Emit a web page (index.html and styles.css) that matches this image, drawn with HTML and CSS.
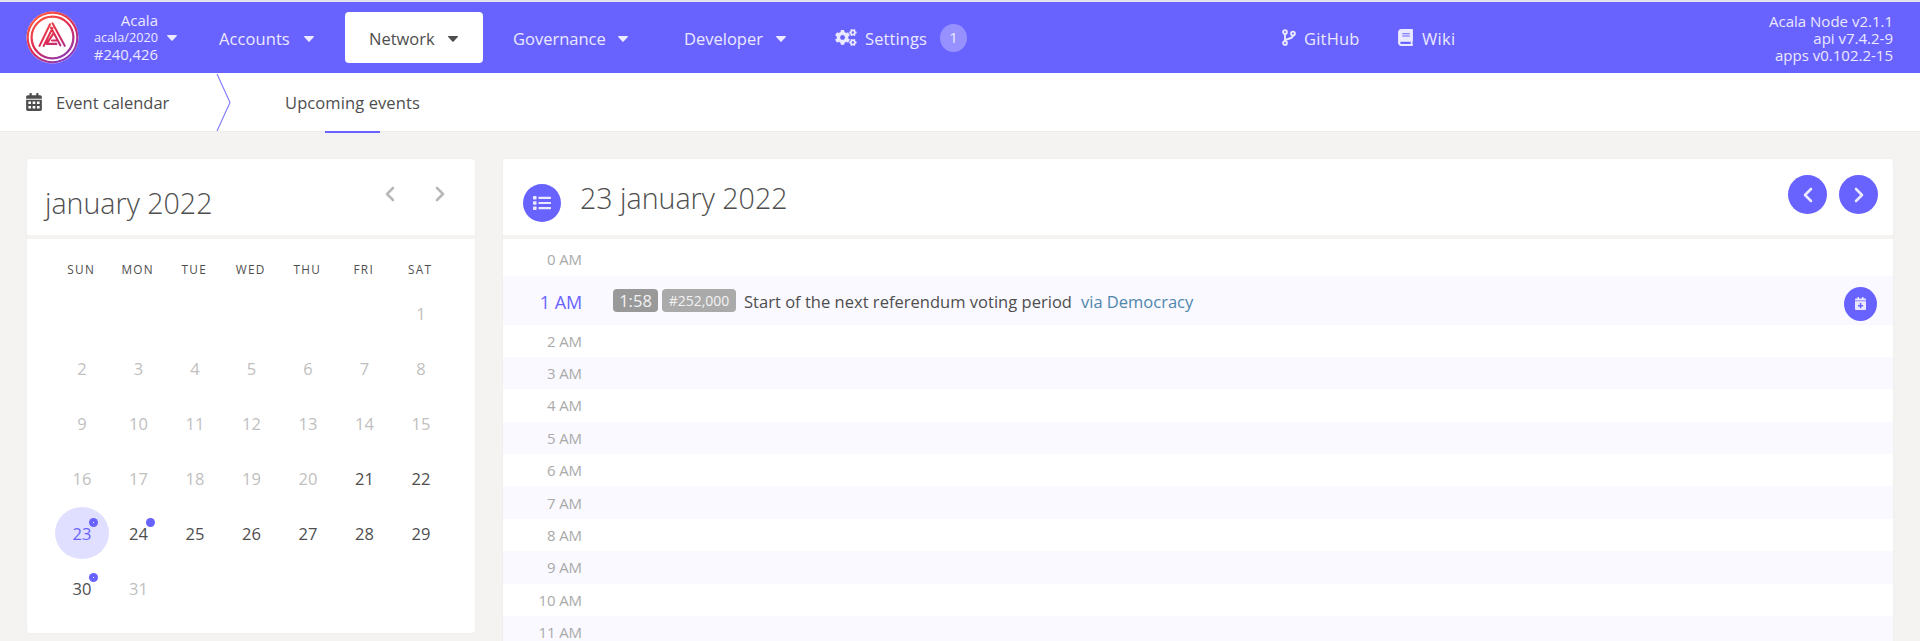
FILE: index.html
```html
<!DOCTYPE html>
<html lang="en">
<head>
<meta charset="utf-8">
<title>Event calendar</title>
<link rel="stylesheet" href="styles.css">
</head>
<body>
<svg class="defs" width="0" height="0">
  <symbol id="caret" viewBox="0 0 10 6"><path d="M.6 0h8.800c.5 0 .8.600.4 1L5.600 5.600a.8.8 0 0 1-1.200 0L.2 1C-.2.600.1 0 .6 0z" fill="currentColor"/></symbol>
  <symbol id="left" viewBox="0 0 10 16"><path d="M8 2L2 8l6 6" fill="none" stroke="currentColor" stroke-width="2.600" stroke-linecap="round" stroke-linejoin="round"/></symbol>
  <symbol id="right" viewBox="0 0 10 16"><path d="M2 2l6 6-6 6" fill="none" stroke="currentColor" stroke-width="2.600" stroke-linecap="round" stroke-linejoin="round"/></symbol>
</svg>
<header class="header">
  <svg class="logo" viewBox="0 0 54 54">
    <defs><linearGradient id="lg" gradientUnits="userSpaceOnUse" x1="8" y1="4" x2="42" y2="54"><stop offset="0" stop-color="#ff5a3c"/><stop offset=".5" stop-color="#dc2a55"/><stop offset="1" stop-color="#7a3cd0"/></linearGradient></defs>
    <circle cx="27" cy="27" r="26.500" fill="#fff"/>
    <circle cx="27" cy="27" r="25.300" fill="none" stroke="url(#lg)" stroke-width="2.200"/>
    <circle cx="27" cy="27" r="21.300" fill="none" stroke="url(#lg)" stroke-width="2.300"/>
    <path d="M27 12.500L39.500 35.500M24.500 13.500L13.800 35.500M27 17.500L18 35.500M25.500 17L35 35M27.500 23.500L21 33.500H31M26.500 30L31 30" fill="none" stroke="url(#lg)" stroke-width="2.100" stroke-linecap="round" stroke-linejoin="round"/>
  </svg>
  <div class="chain"><div class="l1">Acala</div><div class="l2">acala/2020</div><div class="l3">#240,426</div></div>
  <svg class="caret chain-caret"><use href="#caret"/></svg>
  <nav class="nav">
    <a class="item accounts"><span>Accounts</span><svg class="caret"><use href="#caret"/></svg></a>
    <a class="item network"><span>Network</span><svg class="caret"><use href="#caret"/></svg></a>
    <a class="item governance"><span>Governance</span><svg class="caret"><use href="#caret"/></svg></a>
    <a class="item developer"><span>Developer</span><svg class="caret"><use href="#caret"/></svg></a>
    <a class="item settings">
      <svg class="cogs" viewBox="0 0 640 512" fill="currentColor"><path d="M512.100 191l-8.200 14.300c-3 5.300-9.400 7.500-15.100 5.400-11.800-4.400-22.600-10.700-32.100-18.600-4.600-3.800-5.800-10.500-2.800-15.700l8.200-14.300c-6.900-8-12.300-17.300-15.900-27.400h-16.500c-6 0-11.200-4.300-12.200-10.300-2-12-2.100-24.600 0-37.100 1-6 6.200-10.400 12.200-10.400h16.500c3.600-10.100 9-19.400 15.900-27.400l-8.200-14.300c-3-5.200-1.900-11.900 2.800-15.700 9.500-7.900 20.400-14.200 32.100-18.600 5.700-2.100 12.100.1 15.100 5.400l8.200 14.300c10.500-1.900 21.200-1.900 31.700 0L552 6.300c3-5.300 9.400-7.500 15.100-5.400 11.800 4.400 22.600 10.700 32.100 18.600 4.600 3.800 5.800 10.500 2.800 15.700l-8.200 14.300c6.900 8 12.300 17.300 15.900 27.400h16.500c6 0 11.200 4.300 12.200 10.300 2 12 2.100 24.600 0 37.100-1 6-6.200 10.400-12.200 10.400h-16.500c-3.600 10.100-9 19.400-15.900 27.400l8.200 14.300c3 5.200 1.900 11.900-2.800 15.700-9.500 7.900-20.400 14.200-32.100 18.600-5.700 2.100-12.100-.1-15.100-5.400l-8.200-14.300c-10.400 1.900-21.200 1.900-31.700 0zm-10.500-58.800c38.500 29.600 82.400-14.300 52.800-52.800-38.500-29.700-82.400 14.300-52.800 52.800zM386.300 286.100l33.700 16.800c10.100 5.800 14.500 18.100 10.500 29.100-8.900 24.200-26.400 46.400-42.600 65.800-7.400 8.900-20.200 11.100-30.300 5.300l-29.100-16.800c-16 13.700-34.600 24.600-54.900 31.700v33.600c0 11.600-8.300 21.600-19.700 23.600-24.600 4.200-50.400 4.400-75.900 0-11.500-2-20-11.900-20-23.600V418c-20.300-7.200-38.900-18-54.900-31.700L74 403c-10 5.800-22.900 3.600-30.300-5.300-16.200-19.400-33.300-41.600-42.200-65.700-4-10.900.4-23.200 10.500-29.100l33.300-16.800c-3.900-20.900-3.900-42.400 0-63.400L12 205.800c-10.100-5.800-14.600-18.100-10.500-29 8.900-24.200 26-46.400 42.200-65.800 7.400-8.900 20.200-11.100 30.300-5.300l29.100 16.800c16-13.700 34.600-24.600 54.900-31.700V57.100c0-11.500 8.200-21.500 19.600-23.500 24.600-4.200 50.500-4.400 76-.1 11.500 2 20 11.900 20 23.600v33.600c20.300 7.200 38.900 18 54.900 31.700l29.100-16.800c10-5.800 22.900-3.600 30.300 5.300 16.200 19.400 33.200 41.600 42.100 65.800 4 10.900.1 23.200-10 29.100l-33.700 16.800c3.900 21 3.900 42.500 0 63.500zm-117.600 21.100c59.200-77-28.700-164.900-105.700-105.700-59.200 77 28.700 164.900 105.700 105.700zm243.400 182.700l-8.200 14.300c-3 5.300-9.400 7.500-15.100 5.400-11.800-4.400-22.600-10.700-32.100-18.600-4.600-3.800-5.800-10.500-2.800-15.700l8.200-14.300c-6.900-8-12.300-17.300-15.900-27.400h-16.500c-6 0-11.200-4.300-12.200-10.300-2-12-2.100-24.600 0-37.100 1-6 6.200-10.400 12.200-10.400h16.500c3.600-10.100 9-19.400 15.900-27.400l-8.200-14.300c-3-5.200-1.900-11.900 2.800-15.700 9.500-7.900 20.400-14.200 32.100-18.600 5.700-2.100 12.100.1 15.100 5.400l8.200 14.300c10.500-1.900 21.200-1.900 31.700 0l8.200-14.300c3-5.300 9.400-7.500 15.100-5.400 11.800 4.400 22.600 10.700 32.100 18.600 4.600 3.800 5.800 10.500 2.800 15.700l-8.200 14.300c6.900 8 12.300 17.300 15.900 27.400h16.500c6 0 11.200 4.300 12.200 10.300 2 12 2.100 24.600 0 37.100-1 6-6.200 10.400-12.200 10.400h-16.500c-3.600 10.100-9 19.400-15.900 27.400l8.200 14.300c3 5.200 1.900 11.900-2.800 15.700-9.500 7.900-20.400 14.200-32.100 18.600-5.700 2.100-12.100-.1-15.100-5.400l-8.200-14.300c-10.400 1.900-21.200 1.900-31.700 0zM501.600 431c38.500 29.600 82.400-14.300 52.800-52.800-38.500-29.600-82.400 14.300-52.800 52.800z"/></svg>
      <span>Settings</span><b class="count">1</b>
    </a>
  </nav>
  <div class="links">
    <a class="item github"><svg viewBox="0 0 14 17" width="14" height="17" fill="none" stroke="currentColor" stroke-width="1.900"><circle cx="3" cy="3" r="1.900"/><circle cx="3" cy="14" r="1.900"/><circle cx="11" cy="4.500" r="1.900"/><path d="M3 5v7M11 6.500c0 4-7 2.500-8 5.500"/></svg><span>GitHub</span></a>
    <a class="item wiki"><svg viewBox="0 0 448 512" width="15" height="17" fill="currentColor"><path d="M448 360V24c0-13.300-10.700-24-24-24H96C43 0 0 43 0 96v320c0 53 43 96 96 96h328c13.300 0 24-10.700 24-24v-16c0-7.500-3.500-14.300-8.900-18.700-4.200-15.400-4.200-59.300 0-74.700 5.400-4.300 8.900-11.100 8.900-18.600zM128 134c0-3.300 2.700-6 6-6h212c3.300 0 6 2.700 6 6v20c0 3.300-2.700 6-6 6H134c-3.300 0-6-2.700-6-6v-20zm0 64c0-3.300 2.700-6 6-6h212c3.300 0 6 2.700 6 6v20c0 3.300-2.700 6-6 6H134c-3.300 0-6-2.700-6-6v-20zm253.400 250H96c-17.700 0-32-14.300-32-32 0-17.600 14.400-32 32-32h285.400c-1.900 17.100-1.900 46.900 0 64z"/></svg><span>Wiki</span></a>
  </div>
  <div class="versions"><div class="v1">Acala Node v2.1.1</div><div class="v2">api v7.4.2-9</div><div class="v3">apps v0.102.2-15</div></div>
</header>
<div class="tabs">
  <div class="tab-title"><svg viewBox="0 0 448 512" width="16" height="18" fill="currentColor"><path fill-rule="evenodd" d="M0 192v272c0 26.500 21.500 48 48 48h352c26.500 0 48-21.500 48-48V192zM64 240h75v70H64zm122 0h76v70h-76zm123 0h75v70h-75zM64 370h75v70H64zm122 0h76v70h-76zm123 0h75v70h-75zM448 160v-48c0-26.500-21.500-48-48-48h-48V16c0-8.800-7.200-16-16-16h-32c-8.800 0-16 7.200-16 16v48H160V16c0-8.800-7.200-16-16-16h-32c-8.800 0-16 7.200-16 16v48H48C21.500 64 0 85.500 0 112v48z"/></svg><span>Event calendar</span></div>
  <svg class="divider" viewBox="0 0 15 58"><path d="M1 1l13 28.500L1 58" fill="none" stroke="#7d77ff" stroke-width="1.100"/></svg>
  <div class="tab"><span>Upcoming events</span></div>
</div>
<main class="main">
  <section class="panel month">
    <div class="head"><h1>january 2022</h1><svg class="arrow"><use href="#left"/></svg><svg class="arrow"><use href="#right"/></svg></div>
    <div class="weekdays"><span>SUN</span><span>MON</span><span>TUE</span><span>WED</span><span>THU</span><span>FRI</span><span>SAT</span></div>
    <div class="days">
      <i class="first">1</i>
      <i>2</i><i>3</i><i>4</i><i>5</i><i>6</i><i>7</i><i>8</i>
      <i>9</i><i>10</i><i>11</i><i>12</i><i>13</i><i>14</i><i>15</i>
      <i>16</i><i>17</i><i>18</i><i>19</i><i>20</i><i class="on">21</i><i class="on">22</i>
      <i class="on sel">23<em class="dot ring"></em></i><i class="on">24<em class="dot"></em></i><i class="on">25</i><i class="on">26</i><i class="on">27</i><i class="on">28</i><i class="on">29</i>
      <i class="on">30<em class="dot ring"></em></i><i>31</i>
    </div>
  </section>
  <section class="panel day">
    <div class="head">
      <span class="round list"><svg viewBox="0 0 18 14" width="18" height="14" fill="currentColor"><rect width="3.600" height="3.600" rx=".8"/><rect y="5.200" width="3.600" height="3.600" rx=".8"/><rect y="10.400" width="3.600" height="3.600" rx=".8"/><rect x="5.500" y=".7" width="12.500" height="2.200" rx=".6"/><rect x="5.500" y="5.900" width="12.500" height="2.200" rx=".6"/><rect x="5.500" y="11.100" width="12.500" height="2.200" rx=".6"/></svg></span>
      <h1>23 january 2022</h1>
      <span class="round"><svg class="arrow"><use href="#left"/></svg></span><span class="round"><svg class="arrow"><use href="#right"/></svg></span>
    </div>
    <div class="hour zero"><span class="time">0 AM</span></div>
    <div class="hour event"><span class="time">1 AM</span><span class="badge clock">1:58</span><span class="badge block">#252,000</span><span class="text">Start of the next referendum voting period</span><a class="via">via Democracy</a>
      <span class="round add"><svg viewBox="0 0 11 13" width="11" height="13"><path fill="currentColor" fill-rule="evenodd" d="M1 1.500h1.500V0H4v1.500h3V0h1.500v1.500H10a1 1 0 0 1 1 1v1H0v-1a1 1 0 0 1 1-1zM0 4.300h11V12a1 1 0 0 1-1 1H1a1 1 0 0 1-1-1zM4.800 6v1.900H3v1.500h1.800v1.900h1.500V9.400h1.800V7.900H6.300V6z"/></svg></span></div>
    <div class="hour"><span class="time">2 AM</span></div>
    <div class="hour"><span class="time">3 AM</span></div>
    <div class="hour"><span class="time">4 AM</span></div>
    <div class="hour"><span class="time">5 AM</span></div>
    <div class="hour"><span class="time">6 AM</span></div>
    <div class="hour"><span class="time">7 AM</span></div>
    <div class="hour"><span class="time">8 AM</span></div>
    <div class="hour"><span class="time">9 AM</span></div>
    <div class="hour"><span class="time">10 AM</span></div>
    <div class="hour"><span class="time">11 AM</span></div>
  </section>
</main>
</body>
</html>
```
FILE: styles.css
```css
* { box-sizing: border-box; }
body { margin: 0; height: 641px; overflow: hidden; background: #f4f3f1; color: #4e4e4e; font: 16.5px/20px "Open Sans", "Noto Sans", sans-serif; white-space: nowrap; }
svg { display: block; flex: none; }
.defs { position: absolute; }
.header { display: flex; align-items: center; height: 73px; border-top: 2px solid #e4e5ec; background: #6862ff; color: #ebe9ff; padding: 0 27px 0 26px; }
.logo { width: 53px; height: 53px; }
.chain { width: 79px; text-align: right; line-height: 17px; margin-top: -1px; }
.l1 { font-size: 15px; }
.l2 { font-size: 12.7px; }
.l3 { font-size: 14.8px; }
.caret { width: 10px; height: 6px; }
.chain-caret { margin-left: 9px; }
.nav, .links { display: flex; align-items: center; }
.nav { margin-left: 18px; }
.item { display: flex; align-items: center; height: 51px; }
.item > span { flex: none; padding-top: 2px; }
.nav .caret { margin-top: 2px; }
.accounts { width: 150px; padding-left: 24px; }
.accounts span { width: 85px; letter-spacing: .08px; }
.network { width: 138px; padding-left: 24px; background: #fff; color: #4e4e4e; border-radius: 4px; }
.network span { width: 79px; }
.governance { padding-left: 30px; width: 171px; }
.governance span { width: 105px; }
.developer { padding-left: 30px; width: 151px; }
.developer span { width: 92px; }
.settings { padding-left: 30px; }
.cogs { width: 22px; height: 17px; }
.settings span { margin-left: 8px; width: 66px; letter-spacing: .1px; }
.count { width: 27px; height: 28px; margin-left: 9px; border-radius: 50%; background: #9691ff; font-weight: 400; font-size: 15px; line-height: 27px; text-align: center; }
.links { margin-left: 315px; }
.github { width: 116px; }
.github span { margin-left: 8px; letter-spacing: .2px; }
.wiki span { margin-left: 9px; letter-spacing: .3px; }
.versions { margin-left: auto; text-align: right; font-size: 15px; line-height: 17px; margin-top: 2px; }
.tabs { display: flex; height: 59px; background: #fff; border-bottom: 1px solid #ececea; padding-left: 26px; }
.tab-title { display: flex; align-items: center; width: 190px; gap: 14px; letter-spacing: -.02px; }
.tab-title span, .tab span { padding-top: 2px; }
.divider { width: 15px; height: 58px; }
.tab { display: flex; align-items: center; margin-left: 54px; position: relative; width: 135px; letter-spacing: .1px; }
.tab::after { content: ""; position: absolute; left: 40px; bottom: -2px; width: 55px; height: 2px; background: #6862ff; }
.main { display: flex; gap: 28px; padding: 27px 27px 0; height: 509px; overflow: hidden; }
.panel { background: #fff; border-radius: 4px; box-shadow: 0 0 0 1px #f0efed; }
.month { width: 448px; height: 474px; }
.day { flex: 1; height: 482px; overflow: hidden; border-radius: 4px 4px 0 0; }
.head { display: flex; height: 80px; border-bottom: 4px solid #f4f3f1; }
h1 { margin: 0; font-size: 28.6px; line-height: 36px; font-weight: 300; color: #4e4e4e; }
.arrow { width: 10px; height: 16px; }
.month .head { padding: 27px 30px 0 18px; color: #b8b8b8; gap: 40px; }
.month h1 { flex: 1; margin-top: -1px; }
.weekdays, .days { display: grid; grid-template-columns: repeat(7, 56.500px); padding-left: 27px; text-align: center; }
.weekdays { height: 47px; line-height: 61px; font-size: 11.8px; letter-spacing: 1.300px; margin-left: -1px; }
.days { grid-auto-rows: 55px; }
.days i { display: flex; align-items: center; justify-content: center; position: relative; font-style: normal; color: #c0c0c0; height: 52px; width: 54px; margin: 1px; padding-top: 1px; }
.days .first { grid-column: 7; }
.days .on { color: #4e4e4e; }
.days .sel { background: #e1dfff; border-radius: 50%; color: #6862ff; }
.dot { position: absolute; left: 34px; top: 11px; width: 9px; height: 9px; border-radius: 50%; background: #6862ff; }
.ring { background: radial-gradient(circle, #fff 0 .7px, #6862ff .8px); }
.round { flex: none; display: flex; align-items: center; justify-content: center; width: 39px; height: 39px; border-radius: 50%; background: #6862ff; color: #ebe9ff; }
.day .head { padding: 16px 15px 0 20px; gap: 12px; }
.list { width: 38px; height: 38px; margin-top: 9px; }
.day h1 { flex: 1; margin: 5px 0 0 7px; }
.hour { display: flex; align-items: center; height: 32.400px; color: #aaa; font-size: 15px; }
.hour:nth-child(odd) { background: #faf9ff; }
.zero { height: 37px; padding-top: 2px; }
.time { width: 79px; text-align: right; letter-spacing: -.1px; }
.event { height: 48.500px; color: #4e4e4e; font-size: 16.500px; }
.event .time { color: #6862ff; font-size: 18px; padding-top: 3px; }
.badge { height: 23px; border-radius: 4px; color: #f2f2f2; text-align: center; line-height: 24px; }
.clock { width: 45px; margin-left: 31px; background: #999; }
.block { width: 74px; margin-left: 4px; background: #aaa; font-size: 14px; }
.text { margin-left: 8px; width: 337px; padding-top: 3px; letter-spacing: .02px; }
.via { color: #4f86ad; padding-top: 3px; }
.add { width: 33px; height: 34px; margin: 7px 16px 0 auto; }
```
